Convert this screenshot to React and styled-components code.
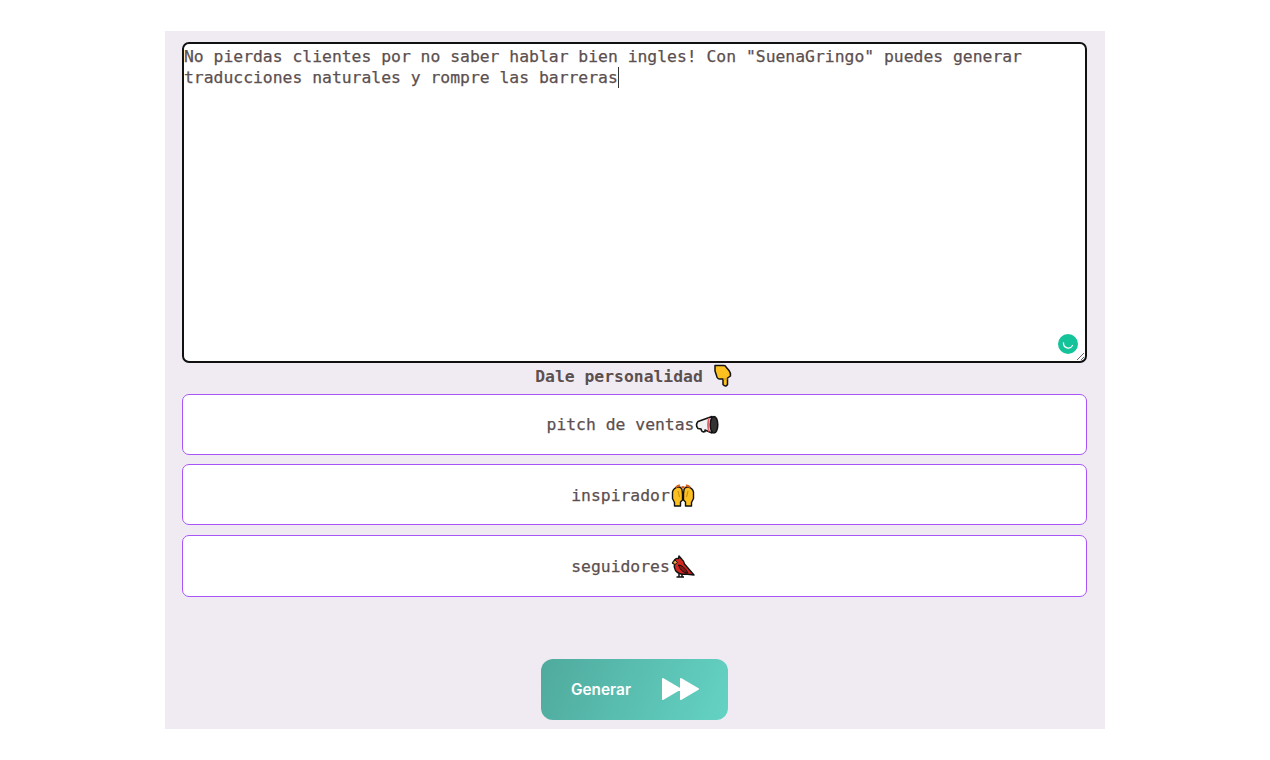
import React from 'react'
import styled, { createGlobalStyle } from 'styled-components'

const GlobalStyle = createGlobalStyle`
  html, body {
    margin: 0;
    padding: 0;
    background: #fff;
  }
`;

const Page = styled.div`
  padding-top: 31px;
  display: flex;
  justify-content: center;
`;

const Panel = styled.main`
  width: 940px;
  height: 698px;
  box-sizing: border-box;
  padding: 11px 18px 0 17px;
  background-color: #f0ebf2;
  display: flex;
  flex-direction: column;
  align-items: center;
`;

const EditorBox = styled.div`
  position: relative;
  width: 100%;
  height: 320.5px;
`;

const Editor = styled.div`
  width: 100%;
  height: 100%;
  box-sizing: border-box;
  padding: 2px 0 0 0;
  border: 2px solid #111;
  border-radius: 7px;
  overflow: auto;
  resize: both;
  background: #fff;
  color: #5c4f4f;
  font-family: "DejaVu Sans Mono", monospace;
  font-size: 16.39px;
  line-height: 21px;
  -webkit-text-stroke: 0.25px #5c4f4f;
`;

const Caret = styled.span`
  display: inline-block;
  width: 1px;
  height: 21px;
  margin-right: -1px;
  vertical-align: top;
  background: #333;
`;

const Grammarly = styled.span`
  position: absolute;
  right: 9px;
  bottom: 8.5px;
  width: 20px;
  height: 20px;
  display: flex;
`;

const Label = styled.h2`
  margin: 0;
  height: 31px;
  display: flex;
  align-items: flex-start;
  justify-content: center;
  gap: 10px;
  padding-right: 2px;
  color: #5c4f4f;
  font-family: "DejaVu Sans Mono", monospace;
  font-weight: 700;
  font-size: 16.39px;
  line-height: 28px;

  svg {
    margin-top: 1.5px;
  }
`;

const Options = styled.div`
  width: 100%;
  display: flex;
  flex-direction: column;
  gap: 9.4px;
`;

const Option = styled.button`
  height: 61.2px;
  width: 100%;
  box-sizing: border-box;
  display: flex;
  align-items: center;
  justify-content: center;
  gap: 1px;
  padding: 1px 0 0 0;
  background: #fff;
  border: 1px solid #a855f7;
  border-radius: 7px;
  color: #5c4f4f;
  font-family: "DejaVu Sans Mono", monospace;
  font-size: 16.39px;
  -webkit-text-stroke: 0.25px #5c4f4f;
  cursor: pointer;

  svg {
    margin-right: 3px;
  }

  &:last-child {
    height: 62px;
  }
`;

const Generate = styled.button`
  margin-top: 62.3px;
  width: 187px;
  height: 61px;
  display: flex;
  align-items: center;
  justify-content: center;
  gap: 30px;
  padding: 0 0 0 2px;
  border: none;
  border-radius: 12px;
  background: linear-gradient(112deg, #4faa9d 0%, #64d3c4 100%);
  color: #fff;
  font-family: Inter, sans-serif;
  font-weight: 600;
  font-size: 15.4px;
  cursor: pointer;
`;

const HandDown = () => (
  <svg width="19" height="24" viewBox="0 0 19 24">
    <path d="M2 1.5 H11 Q12.5 1.5 13 3 L16 6.5 Q18 9 17.5 12 L14.5 14 V20.5 Q12.5 23.5 10 20.5 V15 H7 Q4 15 3.5 11.5 L2 7 Z" fill="#fcc021" stroke="#111" strokeWidth="1.5" strokeLinejoin="round" />
    <path d="M10 15 H14.5" stroke="#c98a10" strokeWidth="1" />
  </svg>
);

const Megaphone = () => (
  <svg width="24" height="20" viewBox="1 0 24 20">
    <path d="M4 6.5 L18 1.5 V18 L11 15 V16.5 Q8 18 7 14 L4 13.5 Q1 10 4 6.5 Z" fill="#f2f2f2" stroke="#111" strokeWidth="1.6" strokeLinejoin="round" />
    <path d="M15 3 Q13 9.5 15 16.5" fill="none" stroke="#e2636c" strokeWidth="1.8" />
    <ellipse cx="20" cy="9.7" rx="3.8" ry="8.3" fill="#333" stroke="#111" strokeWidth="1.5" />
  </svg>
);

const RaisedHands = () => (
  <svg width="24" height="23" viewBox="0 0 24 23">
    <path d="M7 3 Q10 2.5 11 5.5 L11.5 10 V16 L9.5 18 V22 H3.5 V18.5 L1.5 14.5 V8 Q2.5 4 7 3 Z" fill="#fcc021" stroke="#111" strokeWidth="1.4" strokeLinejoin="round" />
    <path d="M17 3 Q14 2.5 13 5.5 L12.5 10 V16 L14.5 18 V22 H20.5 V18.5 L22.5 14.5 V8 Q21.5 4 17 3 Z" fill="#fcc021" stroke="#111" strokeWidth="1.4" strokeLinejoin="round" />
    <path d="M7 7 L8.5 13 M17 7 L15.5 13" stroke="#c98a10" strokeWidth="1" />
    <path d="M5 3.5 Q6.5 1 9 1.5 M15 1.5 Q17.5 1 19 3.5 M10.5 4 Q12 2 13.5 4" fill="none" stroke="#d9601a" strokeWidth="2" />
  </svg>
);

const Cardinal = () => (
  <svg width="24" height="23" viewBox="0 0 24 23">
    <path d="M8 1 L11 4.5 Q13 6 13.5 9 L23 20 L14.5 19 Q8 20 4.5 15.5 Q2.5 12 3.5 9 L1.5 8 L4 4.5 Q5.5 3 7.5 3.5 Z" fill="#d1261f" stroke="#111" strokeWidth="1.4" strokeLinejoin="round" />
    <path d="M1.5 8 L4 5 L6.5 7.5 L4 9.5 Z" fill="#e8a33a" stroke="#111" strokeWidth="0.9" strokeLinejoin="round" />
    <path d="M7.5 10 Q12.5 10 17 18 Q10 18 7.5 10 Z" fill="#8c1515" stroke="#111" strokeWidth="1" strokeLinejoin="round" />
    <path d="M8 19 V22 M11 19 V22 M5.5 22 H13" stroke="#111" strokeWidth="1.5" />
  </svg>
);

const ForwardIcon = () => (
  <svg width="39" height="24" viewBox="0 0 39 24">
    <path d="M2 2 L19 12 L2 22 Z M20 2 L37 12 L20 22 Z" fill="#fff" stroke="#fff" strokeWidth="2" strokeLinejoin="round" />
  </svg>
);

const GrammarlyIcon = () => (
  <svg width="20" height="20" viewBox="0 0 20 20">
    <circle cx="10" cy="10" r="10" fill="#15c39a" />
    <path d="M5.5 9 A4.8 4.8 0 0 0 14.5 11.5" fill="none" stroke="#fff" strokeWidth="1.3" strokeLinecap="round" />
  </svg>
);

const COPY = 'No pierdas clientes por no saber hablar bien ingles! Con "SuenaGringo" puedes generar traducciones naturales y rompre las barreras';

const OPTIONS = [
  { text: 'pitch de ventas', icon: <Megaphone /> },
  { text: 'inspirador', icon: <RaisedHands /> },
  { text: 'seguidores', icon: <Cardinal /> },
];

const App = () => {
  return (
    <Page>
      <GlobalStyle />
      <Panel>
        <EditorBox>
          <Editor role="textbox" aria-multiline="true">{COPY}<Caret /></Editor>
          <Grammarly><GrammarlyIcon /></Grammarly>
        </EditorBox>
        <Label>Dale personalidad <HandDown /></Label>
        <Options>
          {OPTIONS.map((item) => (
            <Option key={item.text}>{item.text}{item.icon}</Option>
          ))}
        </Options>
        <Generate>Generar <ForwardIcon /></Generate>
      </Panel>
    </Page>
  )
}

export default App
